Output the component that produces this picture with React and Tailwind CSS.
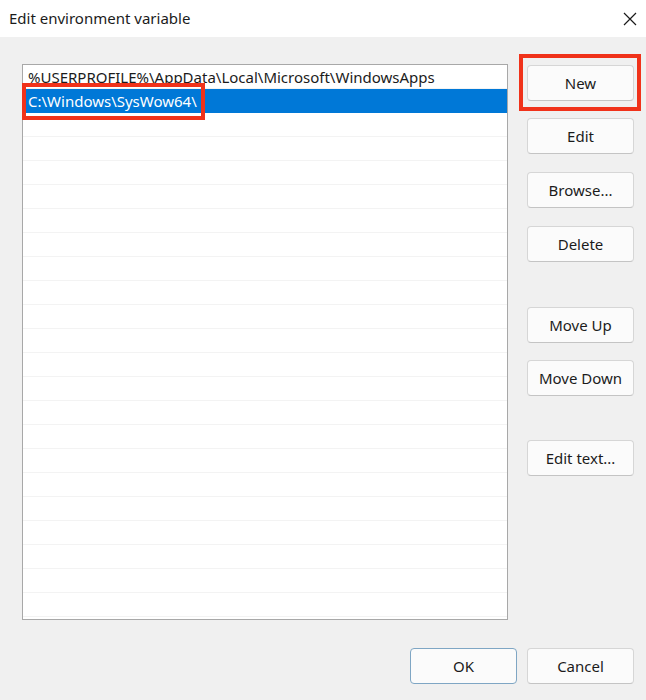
import React from "react";

const Btn = ({ children, className = "", def = false }) => (
  <div
    className={
      "h-[36px] w-[107px] flex items-center justify-center pt-[1px] rounded-[4px] bg-[#fbfbfb] border " +
      (def ? "border-[#7fa6c4] " : "border-[#d6d6d6] border-b-[#c4c4c4] ") +
      className
    }
  >
    {children}
  </div>
);

export default function App() {
  const rows = Array.from({ length: 23 });
  return (
    <div className="w-[646px] h-[700px] bg-[#f0f0f0] flex flex-col font-['Segoe_UI','Noto_Sans',sans-serif] text-[15px] text-[#1b1b1b] overflow-hidden">
      <div className="h-[37px] bg-white flex items-center justify-between pl-[9px] pr-[9px] shrink-0">
        <span className="leading-none">Edit environment variable</span>
        <svg width="14" height="14" viewBox="0 0 14 14">
          <path d="M1 1 L13 13 M13 1 L1 13" stroke="#1b1b1b" strokeWidth="1.2" fill="none" />
        </svg>
      </div>
      <div className="flex pt-[27px] pl-[22px] pr-[12px] gap-[19px]">
        <div className="relative w-[486px] h-[556px] border border-[#a8a8a8] bg-white shrink-0">
          <div className="flex flex-col">
            {rows.map((_, i) => (
              <div
                key={i}
                className={
                  "h-[24px] flex items-center pl-[5px] pt-[2px] whitespace-nowrap border-b " +
                  (i === 1
                    ? "bg-[#0078d7] text-white border-[#0078d7]"
                    : "border-[#f3f3f3]")
                }
              >
                {i === 0 ? "%USERPROFILE%\\AppData\\Local\\Microsoft\\WindowsApps" : i === 1 ? "C:\\Windows\\SysWow64\\" : ""}
              </div>
            ))}
          </div>
          <div className="absolute left-[-1px] top-[18px] w-[183px] h-[37px] border-[4px] border-[#f0321a]" />
        </div>
        <div className="flex flex-col w-[107px] pt-[1px]">
          <div className="relative">
            <Btn>New</Btn>
            <div className="absolute left-[-8px] right-[-7px] top-[-11px] bottom-[-10px] border-[4px] border-[#f0321a]" />
          </div>
          <Btn className="mt-[17px]">Edit</Btn>
          <Btn className="mt-[18px]">Browse...</Btn>
          <Btn className="mt-[18px]">Delete</Btn>
          <Btn className="mt-[45px]">Move Up</Btn>
          <Btn className="mt-[17px]">Move Down</Btn>
          <Btn className="mt-[44px]">Edit text...</Btn>
        </div>
      </div>
      <div className="flex justify-end gap-[10px] pr-[12px] mt-[28px]">
        <Btn def>OK</Btn>
        <Btn>Cancel</Btn>
      </div>
    </div>
  );
}
